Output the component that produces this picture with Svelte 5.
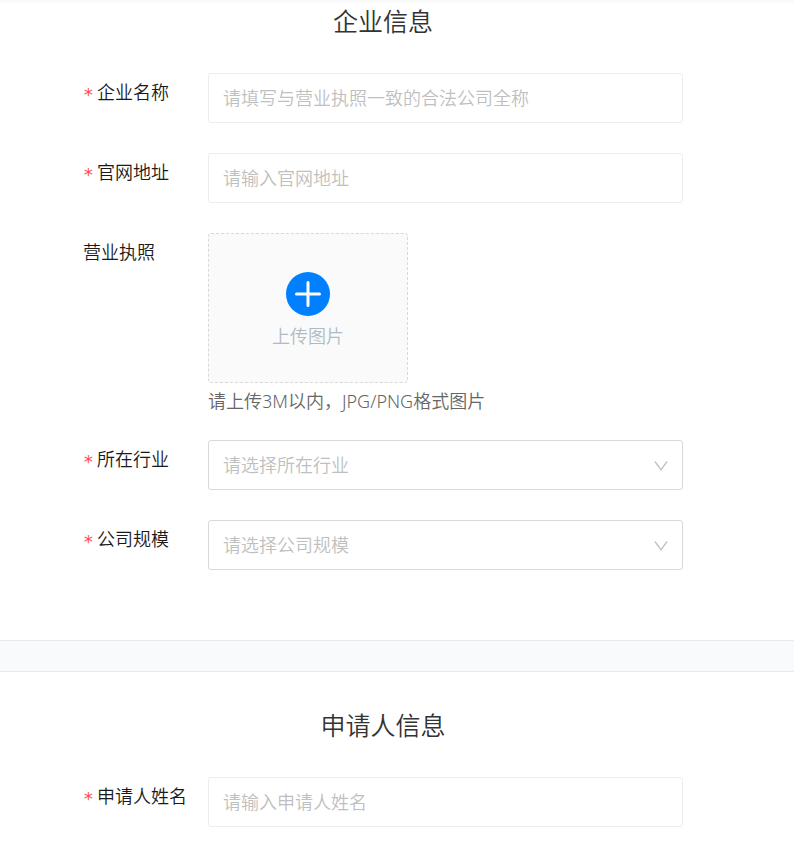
<script>
  const industries = ['互联网', '金融', '教育', '制造业'];
  const sizes = ['1-50人', '51-200人', '201-1000人', '1000人以上'];

  let company = $state('');
  let website = $state('');
  let industry = $state('');
  let size = $state('');
  let applicant = $state('');
</script>

{#snippet caption(id, text)}
  <label class="caption" for={id}><span class="star">*</span>{text}</label>
{/snippet}

{#snippet arrow()}
  <svg class="arrow" viewBox="0 0 14 10" aria-hidden="true">
    <path d="M1 0.5 L7 8.8 L13 0.5" />
  </svg>
{/snippet}

<main>
  <section class="company">
    <h2>企业信息</h2>
    <div class="row">
      {@render caption('company', '企业名称')}
      <input class="box" id="company" type="text" placeholder="请填写与营业执照一致的合法公司全称" bind:value={company} />
    </div>
    <div class="row">
      {@render caption('website', '官网地址')}
      <input class="box" id="website" type="text" placeholder="请输入官网地址" bind:value={website} />
    </div>
    <div class="row upload-row">
      <label class="caption" for="license">营业执照</label>
      <div class="field">
        <button class="upload" id="license" type="button">
          <svg viewBox="0 0 44 44" aria-hidden="true">
            <circle cx="22" cy="22" r="22" />
            <path d="M22 10.5 V33.5 M10.5 22 H33.5" />
          </svg>
          <span>上传图片</span>
        </button>
        <p class="hint">请上传3M以内，JPG/PNG格式图片</p>
      </div>
    </div>
    <div class="row">
      {@render caption('industry', '所在行业')}
      <div class="field">
        <select class="box" id="industry" class:empty={!industry} bind:value={industry}>
          <option value="" disabled hidden>请选择所在行业</option>
          {#each industries as item}<option>{item}</option>{/each}
        </select>
        {@render arrow()}
      </div>
    </div>
    <div class="row">
      {@render caption('size', '公司规模')}
      <div class="field">
        <select class="box" id="size" class:empty={!size} bind:value={size}>
          <option value="" disabled hidden>请选择公司规模</option>
          {#each sizes as item}<option>{item}</option>{/each}
        </select>
        {@render arrow()}
      </div>
    </div>
  </section>

  <div class="divider"></div>

  <section class="applicant">
    <h2>申请人信息</h2>
    <div class="row">
      {@render caption('applicant', '申请人姓名')}
      <input class="box" id="applicant" type="text" placeholder="请输入申请人姓名" bind:value={applicant} />
    </div>
  </section>
</main>

<style>
  :global(body) {
    margin: 0;
    background: #fff;
  }

  main,
  input,
  select,
  button {
    font-family: 'Noto Sans', 'Noto Sans CJK SC', sans-serif;
    font-size: 18px;
    font-weight: 350;
  }

  section {
    padding: 0 111px 0 83px;
  }

  .company {
    padding-top: 7px;
    padding-bottom: 40px;
    background: linear-gradient(#f8f8f8, #fff 4px);
  }

  .applicant {
    padding-top: 39px;
  }

  h2 {
    margin: 0 0 38px;
    color: #333;
    font-size: 25px;
    font-weight: 350;
    line-height: 28px;
    text-align: center;
  }

  .row {
    display: flex;
    align-items: flex-start;
    margin-bottom: 30px;
  }

  .upload-row {
    margin-bottom: 20px;
  }

  .caption {
    display: flex;
    flex: 0 0 125px;
    color: #1a1a1a;
    line-height: 38px;
    white-space: nowrap;
  }

  .star {
    width: 10px;
    margin-right: 4px;
    color: #ff4d4f;
    font-family: 'DejaVu Sans Mono', monospace;
    font-weight: 400;
    line-height: 44px;
    height: 38px;
  }

  .field {
    position: relative;
    flex: 1;
    min-width: 0;
  }

  .box {
    box-sizing: border-box;
    flex: 1;
    width: 100%;
    min-width: 0;
    height: 50px;
    margin: 0;
    padding: 0 14px;
    border: 1px solid #ebedf0;
    border-radius: 3px;
    outline: none;
    background: #fff;
    color: #1a1a1a;
  }

  .box::placeholder {
    color: #bfbfbf;
    opacity: 1;
  }

  select.box {
    display: block;
    border-color: #d9d9d9;
    appearance: none;
  }

  select.empty {
    color: #bfbfbf;
  }

  .box:focus {
    border-color: #0080ff;
  }

  .arrow {
    position: absolute;
    top: 21px;
    right: 15px;
    width: 14px;
    height: 10px;
    fill: none;
    stroke: #bfbfbf;
    stroke-width: 1.3;
    pointer-events: none;
  }

  .upload {
    display: flex;
    box-sizing: border-box;
    flex-direction: column;
    align-items: center;
    justify-content: center;
    gap: 6px;
    width: 200px;
    height: 150px;
    padding: 6px 0 0;
    border: 1px dashed #d9d9d9;
    border-radius: 3px;
    background: #fafafa;
    color: #b0bac3;
    line-height: 28px;
    cursor: pointer;
  }

  .upload svg {
    width: 44px;
    height: 44px;
    fill: #0080ff;
    stroke: #fff;
    stroke-width: 3;
    stroke-linecap: round;
  }

  .upload circle {
    stroke: none;
  }

  .hint {
    margin: 0;
    color: #666;
    line-height: 37px;
  }

  .divider {
    height: 30px;
    border: solid #e8eaec;
    border-width: 1px 0;
    background: #f8fafc;
  }
</style>
